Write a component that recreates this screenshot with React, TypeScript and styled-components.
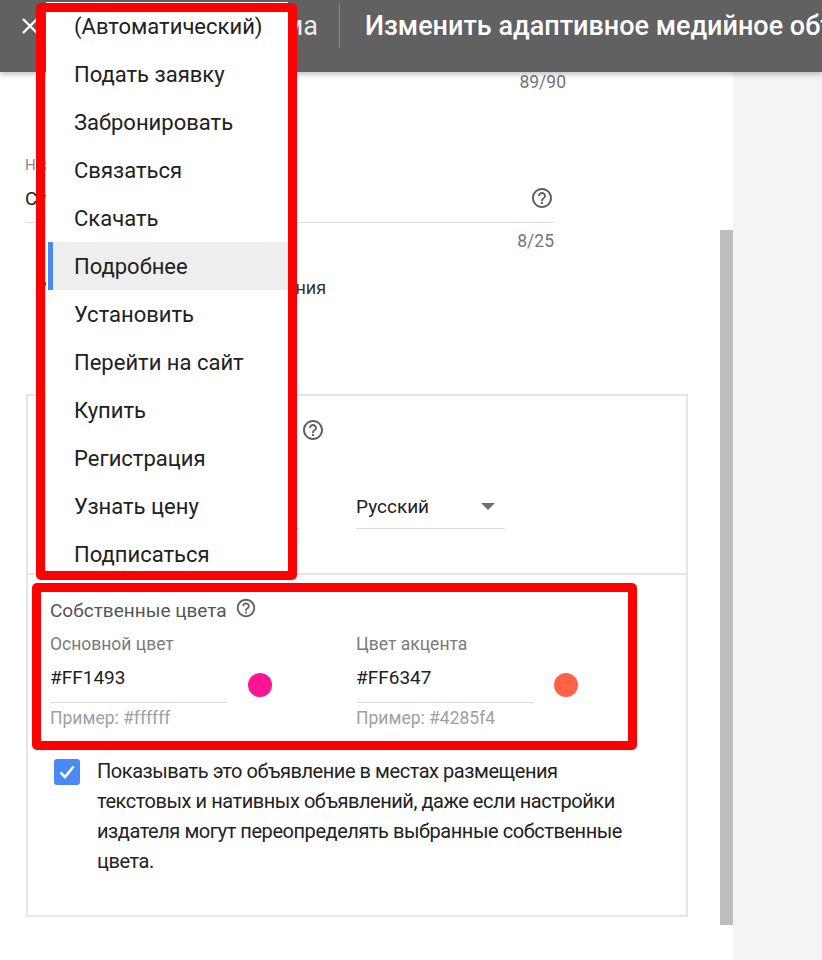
import React from "react";
import styled, { createGlobalStyle } from "styled-components";

const GlobalStyle = createGlobalStyle`
  html, body { margin: 0; padding: 0; background: #ffffff; }
  body { font-family: Roboto, "Noto Sans", Arial, sans-serif; }
  * { box-sizing: border-box; }
`;

const Page = styled.div`
  position: relative;
  width: 822px;
  height: 960px;
  overflow: hidden;
  background: #fff;
`;

const Header = styled.header`
  position: relative;
  z-index: 1;
  height: 72px;
  background: #616161;
  box-shadow: 0 2px 6px rgba(0, 0, 0, 0.28);
`;

const HeaderRow = styled.div`
  height: 52px;
  display: flex;
  align-items: center;
  padding-left: 18px;
  color: #fff;
  white-space: nowrap;
`;

const CloseButton = styled.div`
  flex: none;
  width: 24px;
  height: 24px;
  display: flex;
  align-items: center;
  justify-content: center;
`;

const CrumbTitle = styled.div`
  flex: none;
  width: 264px;
  margin-left: 12px;
  display: flex;
  justify-content: flex-end;
  overflow: hidden;
  font-size: 27px;
  color: #ececec;
`;

const Divider = styled.div`
  flex: none;
  width: 1px;
  height: 44px;
  background: #8c8c8c;
  margin: 0 25px 0 21px;
`;

const PageTitle = styled.div`
  flex: none;
  font-size: 27px;
  font-weight: 500;
  color: #fff;
`;

const Body = styled.div`
  display: flex;
  height: 888px;
`;

const Main = styled.main`
  width: 733px;
  display: flex;
  background: #fff;
`;

const Content = styled.div`
  flex: 1;
  padding-left: 25px;
  display: flex;
  flex-direction: column;
`;

const ScrollTrack = styled.div`
  width: 13px;
`;

const ScrollThumb = styled.div`
  margin-top: 158px;
  height: 695px;
  background: #bdbdbd;
`;

const Side = styled.aside`
  flex: 1;
  background: #f4f4f4;
`;

const Counter = styled.div<{ $w: number; $mt?: number }>`
  width: ${(p) => p.$w}px;
  margin-top: ${(p) => p.$mt ?? 0}px;
  text-align: right;
  font-size: 17.5px;
  line-height: 20px;
  color: #757575;
`;

const TextField = styled.div<{ $w: number }>`
  width: ${(p) => p.$w}px;
  margin-top: 64px;
  display: flex;
  flex-direction: column;
`;

const FieldLabel = styled.div`
  font-size: 15px;
  line-height: 18px;
  color: #8a8a8a;
`;

const InputRow = styled.div`
  height: 49px;
  display: flex;
  align-items: center;
  justify-content: space-between;
  border-bottom: 1px solid #dedede;
  font-size: 19px;
  color: #212121;
`;

const HelpIcon = ({ size = 24 }: { size?: number }) => (
  <svg width={size} height={size} viewBox="0 0 24 24" fill="#616161">
    <path d="M11 18h2v-2h-2v2zm1-16C6.48 2 2 6.48 2 12s4.48 10 10 10 10-4.48 10-10S17.52 2 12 2zm0 18c-4.41 0-8-3.59-8-8s3.59-8 8-8 8 3.59 8 8-3.59 8-8 8zm0-14c-2.21 0-4 1.79-4 4h2c0-1.1.9-2 2-2s2 .9 2 2c0 2-3 1.75-3 5h2c0-2.25 3-2.5 3-5 0-2.21-1.79-4-4-4z" />
  </svg>
);

const ToggleRow = styled.div`
  margin-top: 26px;
  margin-left: 8px;
  height: 20px;
  display: flex;
  align-items: center;
  gap: 14px;
  font-size: 18px;
  color: #333;
  white-space: nowrap;
`;

const Card = styled.section`
  margin-top: 97px;
  margin-left: 1px;
  width: 662px;
  border: 2px solid #e6e6e6;
`;

const CardSection = styled.div<{ $pt: number; $pb: number; $divider?: boolean }>`
  padding: ${(p) => p.$pt}px 22px ${(p) => p.$pb}px 22px;
  border-top: ${(p) => (p.$divider ? "2px solid #e6e6e6" : "none")};
`;

const SectionTitle = styled.div`
  display: flex;
  align-items: center;
  gap: 10px;
  font-size: 19px;
  line-height: 24px;
  color: #555;
`;

const SelectRow = styled.div`
  margin-top: 42px;
  display: grid;
  grid-template-columns: 250px 149px;
  column-gap: 56px;
`;

const Select = styled.div`
  height: 45px;
  display: flex;
  align-items: center;
  justify-content: space-between;
  padding-right: 10px;
  border-bottom: 1px solid #dcdcdc;
  font-size: 19px;
  color: #212121;
`;

const Caret = styled.div`
  width: 0;
  height: 0;
  border-left: 7px solid transparent;
  border-right: 7px solid transparent;
  border-top: 7px solid #6f6f6f;
`;

const ColorTitle = styled(SectionTitle)`
  gap: 8px;
  & svg { margin-top: -6px; }
`;

const ColorGrid = styled.div`
  margin-top: 11px;
  display: grid;
  grid-template-columns: 306px 230px;
`;

const ColorField = styled.div`
  display: grid;
  grid-template-columns: 178px 24px;
  column-gap: 20px;
`;

const ColorCol = styled.div`
  display: flex;
  flex-direction: column;
`;

const SmallLabel = styled.div<{ $muted?: boolean }>`
  font-size: 17.5px;
  line-height: 20px;
  white-space: nowrap;
  color: ${(p) => (p.$muted ? "#a0a0a0" : "#7a7a7a")};
`;

const ColorInput = styled.div`
  margin-top: 12px;
  padding-bottom: 12px;
  border-bottom: 1px solid #dcdcdc;
  font-size: 19px;
  line-height: 24px;
  color: #212121;
`;

const Hint = styled(SmallLabel)`
  margin-top: 5px;
`;

const Swatch = styled.div<{ $c: string }>`
  margin-top: 39px;
  width: 24px;
  height: 24px;
  border-radius: 50%;
  background: ${(p) => p.$c};
`;

const CheckRow = styled.div`
  margin-top: 28px;
  margin-left: 4px;
  display: flex;
  gap: 17px;
`;

const CheckBox = styled.div`
  flex: none;
  margin-top: 3px;
  width: 26px;
  height: 26px;
  border-radius: 3px;
  background: #4a8af4;
  display: flex;
  align-items: center;
  justify-content: center;
`;

const CheckText = styled.div`
  width: 545px;
  font-size: 20px;
  letter-spacing: -0.45px;
  line-height: 30px;
  color: #222;
  padding-bottom: 39px;
`;

/* overlays */
const Menu = styled.ul`
  position: absolute;
  z-index: 5;
  left: 46px;
  top: 2px;
  width: 242px;
  margin: 0;
  padding: 0;
  list-style: none;
  background: #fff;
  box-shadow: -1px 0 2px rgba(0, 0, 0, 0.15);
`;

const MenuItem = styled.li<{ $active?: boolean }>`
  height: 48px;
  display: flex;
  align-items: center;
  margin-left: 2px;
  padding-left: 26px;
  font-size: 22px;
  color: #212121;
  white-space: nowrap;
  background: ${(p) => (p.$active ? "#eeeeee" : "transparent")};
  box-shadow: ${(p) => (p.$active ? "inset 5px 0 0 #4a8af4" : "none")};
`;

const RedFrame = styled.div<{ $l: number; $t: number; $w: number; $h: number }>`
  position: absolute;
  z-index: 6;
  left: ${(p) => p.$l}px;
  top: ${(p) => p.$t}px;
  width: ${(p) => p.$w}px;
  height: ${(p) => p.$h}px;
  border: 9px solid #ff0000;
  border-radius: 5px;
  pointer-events: none;
`;

const menuItems = [
  "(Автоматический)",
  "Подать заявку",
  "Забронировать",
  "Связаться",
  "Скачать",
  "Подробнее",
  "Установить",
  "Перейти на сайт",
  "Купить",
  "Регистрация",
  "Узнать цену",
  "Подписаться",
];

export default function App() {
  return (
    <>
      <GlobalStyle />
      <Page>
        <Header>
          <HeaderRow>
            <CloseButton>
              <svg width="18" height="18" viewBox="0 0 18 18" stroke="#fff" strokeWidth="2.4">
                <path d="M2 2L16 16M16 2L2 16" />
              </svg>
            </CloseButton>
            <CrumbTitle>Медийная схема</CrumbTitle>
            <Divider />
            <PageTitle>Изменить адаптивное медийное объявление</PageTitle>
          </HeaderRow>
        </Header>
        <Body>
          <Main>
            <Content>
              <Counter $w={541}>89/90</Counter>
              <TextField $w={529}>
                <FieldLabel>Название компании</FieldLabel>
                <InputRow>
                  <span>Стиль</span>
                  <HelpIcon />
                </InputRow>
                <Counter $w={529} $mt={8}>8/25</Counter>
              </TextField>
              <ToggleRow>
                <svg width="30" height="20" viewBox="0 0 30 20" fill="none" stroke="#444" strokeWidth="2">
                  <path d="M3 17L15 4L27 17" />
                </svg>
                <span>Параметры форматирования</span>
              </ToggleRow>
              <Card>
                <CardSection $pt={22} $pb={44}>
                  <SectionTitle>
                    Текст призыва к действию
                    <HelpIcon />
                  </SectionTitle>
                  <SelectRow>
                    <Select>
                      <span>(Автоматический)</span>
                      <Caret />
                    </Select>
                    <Select>
                      <span>Русский</span>
                      <Caret />
                    </Select>
                  </SelectRow>
                </CardSection>
                <CardSection $pt={24} $pb={0} $divider>
                  <ColorTitle>
                    Собственные цвета
                    <HelpIcon size={22} />
                  </ColorTitle>
                  <ColorGrid>
                    <ColorField>
                      <ColorCol>
                        <SmallLabel>Основной цвет</SmallLabel>
                        <ColorInput>#FF1493</ColorInput>
                        <Hint $muted>Пример: #ffffff</Hint>
                      </ColorCol>
                      <Swatch $c="#ff1493" />
                    </ColorField>
                    <ColorField>
                      <ColorCol>
                        <SmallLabel>Цвет акцента</SmallLabel>
                        <ColorInput>#FF6347</ColorInput>
                        <Hint $muted>Пример: #4285f4</Hint>
                      </ColorCol>
                      <Swatch $c="#ff6347" />
                    </ColorField>
                  </ColorGrid>
                  <CheckRow>
                    <CheckBox>
                      <svg width="20" height="20" viewBox="0 0 20 20" fill="none" stroke="#fff" strokeWidth="2.6">
                        <path d="M3.5 10.5L8 15L16.5 4.5" />
                      </svg>
                    </CheckBox>
                    <CheckText>
                      Показывать это объявление в местах размещения текстовых и нативных объявлений, даже если
                      настройки издателя могут переопределять выбранные собственные цвета.
                    </CheckText>
                  </CheckRow>
                </CardSection>
              </Card>
            </Content>
            <ScrollTrack>
              <ScrollThumb />
            </ScrollTrack>
          </Main>
          <Side />
        </Body>
        <Menu>
          {menuItems.map((m) => (
            <MenuItem key={m} $active={m === "Подробнее"}>
              {m}
            </MenuItem>
          ))}
        </Menu>
        <RedFrame $l={36} $t={3} $w={261} $h={577} />
        <RedFrame $l={32} $t={583} $w={605} $h={167} />
      </Page>
    </>
  );
}
